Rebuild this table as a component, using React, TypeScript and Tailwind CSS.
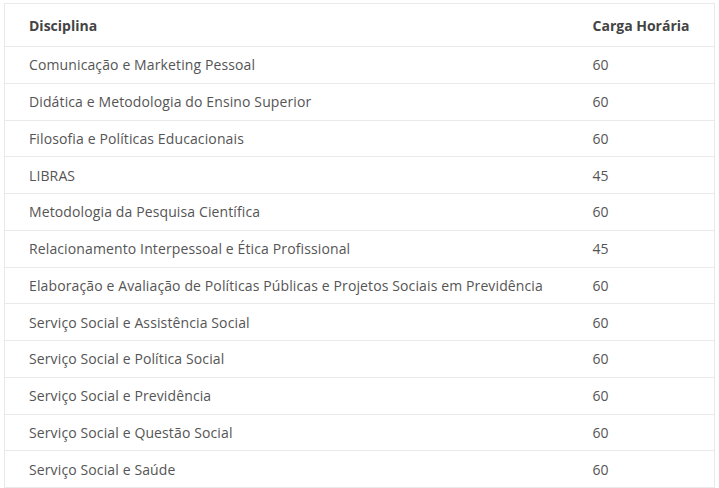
const rows: [string, string][] = [
  ["Comunicação e Marketing Pessoal", "60"],
  ["Didática e Metodologia do Ensino Superior", "60"],
  ["Filosofia e Políticas Educacionais", "60"],
  ["LIBRAS", "45"],
  ["Metodologia da Pesquisa Científica", "60"],
  ["Relacionamento Interpessoal e Ética Profissional", "45"],
  ["Elaboração e Avaliação de Políticas Públicas e Projetos Sociais em Previdência", "60"],
  ["Serviço Social e Assistência Social", "60"],
  ["Serviço Social e Política Social", "60"],
  ["Serviço Social e Previdência", "60"],
  ["Serviço Social e Questão Social", "60"],
  ["Serviço Social e Saúde", "60"],
];

export default function App() {
  return (
    <div className="w-[719px] h-[488px] bg-white pt-[3px] pl-[4px] font-['Open_Sans',sans-serif] text-[14px] text-[#555]">
      <table className="w-[711px] border-collapse border border-[#e9e9e9]">
        <thead>
          <tr className="h-[43px]">
            <th className="text-left font-bold text-[#444] pl-[24px]">Disciplina</th>
            <th className="text-left font-bold text-[#444] w-[122px]">Carga Horária</th>
          </tr>
        </thead>
        <tbody>
          {rows.map(([name, hours]) => (
            <tr key={name} className="h-[36.75px] border-t border-[#e9e9e9]">
              <td className="pl-[24px] tracking-[0.12px]">{name}</td>
              <td className="tracking-[0.12px]">{hours}</td>
            </tr>
          ))}
        </tbody>
      </table>
    </div>
  );
}
